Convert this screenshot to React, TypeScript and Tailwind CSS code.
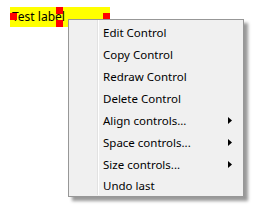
import React from "react";

const ITEMS: { label: string; sub?: boolean }[] = [
  { label: "Edit Control" },
  { label: "Copy Control" },
  { label: "Redraw Control" },
  { label: "Delete Control" },
  { label: "Align controls...", sub: true },
  { label: "Space controls...", sub: true },
  { label: "Size controls...", sub: true },
  { label: "Undo last" },
];

function Handle({ className }: { className: string }) {
  return <div className={`absolute h-[7px] w-[7px] bg-[#ff0000] ${className}`} />;
}

function SubArrow() {
  return (
    <svg width="4" height="7" viewBox="0 0 4 7" className="block">
      <polygon points="0,0 4,3.5 0,7" fill="#000" />
    </svg>
  );
}

export default function App() {
  return (
    <div
      className="relative h-[211px] w-[257px] overflow-hidden bg-white"
      style={{ fontFamily: '"Noto Sans", "Open Sans", sans-serif' }}
    >
      <div className="relative ml-[10px] mt-[7px] flex h-[20px] w-[100px] items-center bg-[#ffff00] pl-[2px] text-[12px] text-black">
        <span>Test label</span>
        <Handle className="left-0 top-[6px]" />
        <Handle className="left-[46px] top-0" />
        <Handle className="left-[46px] bottom-0" />
        <Handle className="right-0 top-[6px]" />
      </div>

      <div className="absolute left-[68px] top-[19px] flex h-[178px] w-[176px] border border-[#979797] bg-[#f0f0f0] shadow-[4px_4px_3px_rgba(0,0,0,0.4)]">
        <div className="ml-[28px] mb-[1px] w-[2px] border-l border-[#e2e2e2] bg-white" />
        <div className="flex flex-1 flex-col pt-[1px]">
          {ITEMS.map((item) => (
            <div key={item.label} className="flex h-[22px] items-center pl-[4px] pr-[11px] pt-[2px] text-[11.5px] text-black">
              <span className="flex-1">{item.label}</span>
              {item.sub && <SubArrow />}
            </div>
          ))}
        </div>
      </div>
    </div>
  );
}
